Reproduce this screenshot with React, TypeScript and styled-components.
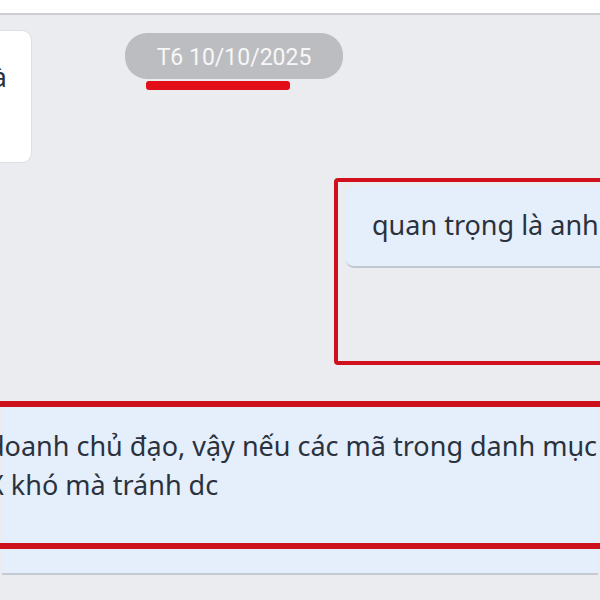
import React from 'react';
import styled, { createGlobalStyle } from 'styled-components';

const GlobalStyle = createGlobalStyle`
  html, body {
    margin: 0;
    padding: 0;
    width: 600px;
    height: 600px;
    overflow: hidden;
    background: #ecedf0;
  }
`;

const Screen = styled.div`
  width: 600px;
  height: 600px;
  overflow: hidden;
  background: #ebecf0;
  display: flex;
  flex-direction: column;
  font-family: 'Noto Sans', 'Open Sans', sans-serif;
  color: #2a323d;
`;

const TopStrip = styled.div`
  height: 13px;
  flex-shrink: 0;
  background: #ffffff;
  border-bottom: 2px solid #cdced2;
`;

const FirstRow = styled.div`
  display: flex;
  align-items: flex-start;
  flex-shrink: 0;
`;

const IncomingBubble = styled.div`
  width: 200px;
  height: 133px;
  margin: 15px 0 0 -168px;
  box-sizing: border-box;
  background: #ffffff;
  border: 1px solid #dedfe3;
  border-radius: 10px;
  padding: 28px 24px 0 0;
  text-align: right;
  font-size: 27px;
  line-height: 36px;
  white-space: nowrap;
  flex-shrink: 0;
`;

const DateBlock = styled.div`
  display: flex;
  flex-direction: column;
  margin: 18px 0 0 93px;
`;

const DatePill = styled.div`
  width: 218px;
  height: 46px;
  box-sizing: border-box;
  padding-top: 3px;
  border-radius: 22px;
  background: #bcbdc1;
  color: #f7f7f7;
  font-family: Roboto, 'Noto Sans', sans-serif;
  font-size: 23px;
  display: flex;
  align-items: center;
  justify-content: center;
`;

const Underline = styled.div`
  width: 144px;
  height: 9px;
  margin: 2px 0 0 21px;
  border-radius: 3px;
  background: #e20d17;
`;

const SecondRow = styled.div`
  display: flex;
  flex-shrink: 0;
  margin-top: 15px;
`;

const MarkBox = styled.div`
  margin-left: 334px;
  width: 300px;
  height: 187px;
  box-sizing: border-box;
  border: 4px solid #d0101c;
  border-radius: 4px;
  padding: 4px 0 0 8px;
  flex-shrink: 0;
`;

const OutgoingBubble = styled.div`
  height: 82px;
  box-sizing: border-box;
  background: #e5eefb;
  border-radius: 8px;
  border-bottom: 2px solid #c3c8d0;
  padding: 21px 0 0 26px;
  font-size: 27px;
  line-height: 36px;
  white-space: nowrap;
`;

const WideBubble = styled.div`
  margin: 36px 2px 0;
  height: 174px;
  box-sizing: border-box;
  background: #e5eefb;
  border-bottom: 2px solid #c6cad2;
  flex-shrink: 0;
`;

const WideMark = styled.div`
  margin: 0 -8px;
  height: 148px;
  box-sizing: border-box;
  border-top: 6px solid #cc101c;
  border-bottom: 6px solid #cc101c;
  padding: 19px 0 0 0;
`;

const WideText = styled.div`
  margin-left: -6px;
  font-size: 27px;
  line-height: 39px;
  white-space: nowrap;
`;

export default function App() {
  return (
    <>
      <GlobalStyle />
      <Screen>
        <TopStrip />
        <FirstRow>
          <IncomingBubble>thì là</IncomingBubble>
          <DateBlock>
            <DatePill>T6 10/10/2025</DatePill>
            <Underline />
          </DateBlock>
        </FirstRow>
        <SecondRow>
          <MarkBox>
            <OutgoingBubble>quan trọng là anh</OutgoingBubble>
          </MarkBox>
        </SecondRow>
        <WideBubble>
          <WideMark>
            <WideText>
              doanh chủ đạo, vậy nếu các mã trong danh mục
              <br />
              X khó mà tránh dc
            </WideText>
          </WideMark>
        </WideBubble>
      </Screen>
    </>
  );
}
